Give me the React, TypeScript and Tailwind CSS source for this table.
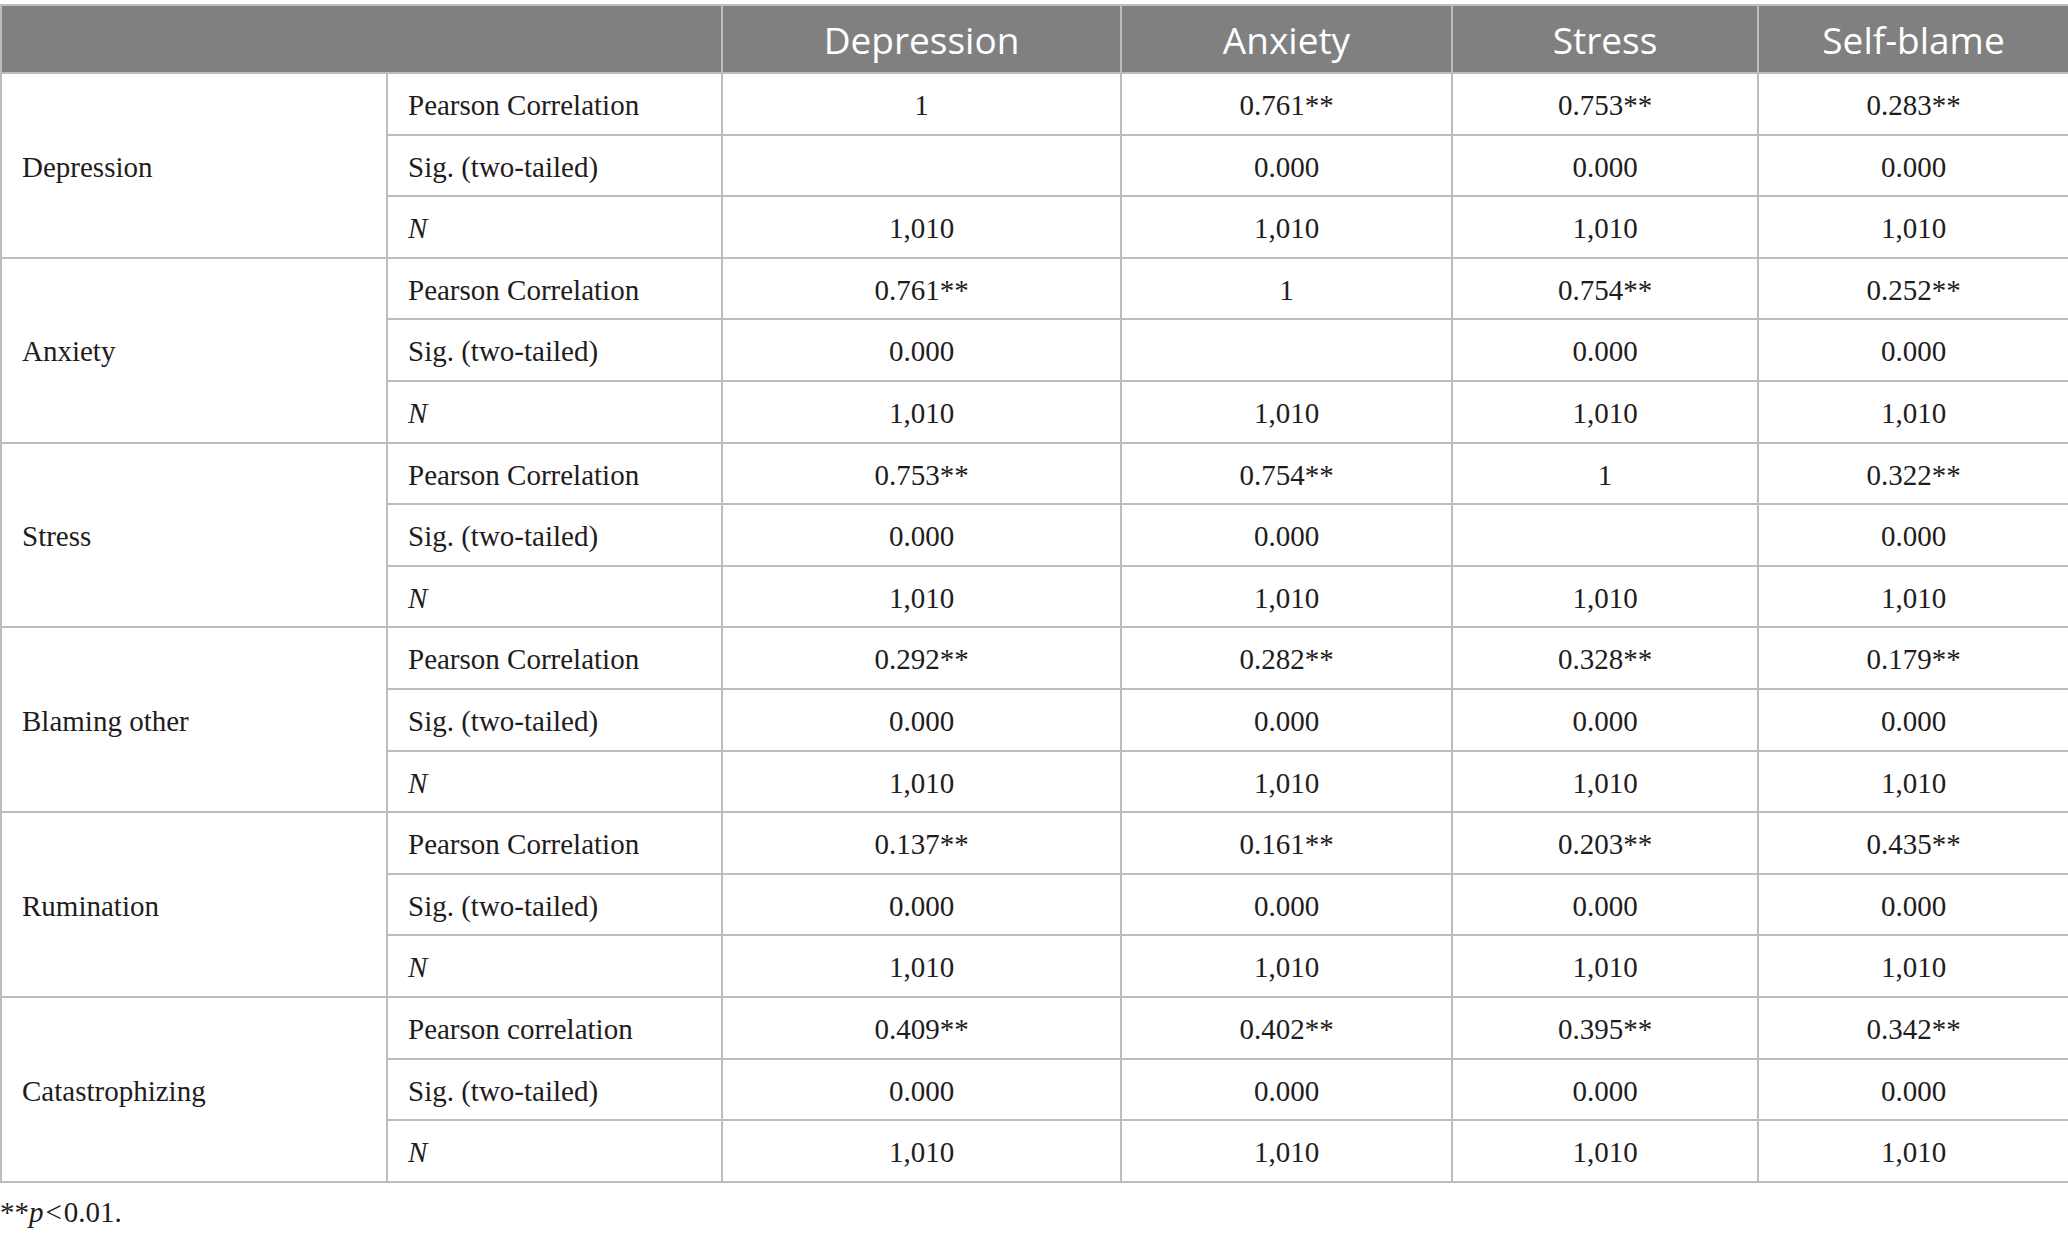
const columns = ["Depression", "Anxiety", "Stress", "Self-blame"];

type Group = {
  name: string;
  pearsonLabel: string;
  pearson: string[];
  sig: string[];
};

const groups: Group[] = [
  {
    name: "Depression",
    pearsonLabel: "Pearson Correlation",
    pearson: ["1", "0.761**", "0.753**", "0.283**"],
    sig: ["", "0.000", "0.000", "0.000"],
  },
  {
    name: "Anxiety",
    pearsonLabel: "Pearson Correlation",
    pearson: ["0.761**", "1", "0.754**", "0.252**"],
    sig: ["0.000", "", "0.000", "0.000"],
  },
  {
    name: "Stress",
    pearsonLabel: "Pearson Correlation",
    pearson: ["0.753**", "0.754**", "1", "0.322**"],
    sig: ["0.000", "0.000", "", "0.000"],
  },
  {
    name: "Blaming other",
    pearsonLabel: "Pearson Correlation",
    pearson: ["0.292**", "0.282**", "0.328**", "0.179**"],
    sig: ["0.000", "0.000", "0.000", "0.000"],
  },
  {
    name: "Rumination",
    pearsonLabel: "Pearson Correlation",
    pearson: ["0.137**", "0.161**", "0.203**", "0.435**"],
    sig: ["0.000", "0.000", "0.000", "0.000"],
  },
  {
    name: "Catastrophizing",
    pearsonLabel: "Pearson correlation",
    pearson: ["0.409**", "0.402**", "0.395**", "0.342**"],
    sig: ["0.000", "0.000", "0.000", "0.000"],
  },
];

const cell = "border-2 border-[#bdbdbd] align-middle pt-1";
const num = `${cell} text-center`;

export default function App() {
  return (
    <div className="w-[2068px] min-h-[1236px] bg-white pt-1 font-['Liberation_Serif',serif] text-[29px] text-[#1f1c1d]">
      <table className="w-[2068px] table-fixed border-collapse">
        <colgroup>
          <col className="w-[386px]" />
          <col className="w-[335px]" />
          <col className="w-[399px]" />
          <col className="w-[331px]" />
          <col className="w-[306px]" />
          <col className="w-[311px]" />
        </colgroup>
        <thead>
          <tr className="h-[68px] bg-[#808080]">
            <th colSpan={2} className="border-2 border-[#bdbdbd]"></th>
            {columns.map((c) => (
              <th
                key={c}
                className="border-2 border-[#bdbdbd] pt-[2px] text-center align-middle font-['Open_Sans',sans-serif] text-[37px] font-normal text-white"
              >
                {c}
              </th>
            ))}
          </tr>
        </thead>
        <tbody>
          {groups.map((g) => (
            <>
              <tr key={`${g.name}-p`} className="h-[61.6px]">
                <td rowSpan={3} className={`${cell} pl-5`}>
                  {g.name}
                </td>
                <td className={`${cell} pl-5`}>{g.pearsonLabel}</td>
                {g.pearson.map((v, i) => (
                  <td key={i} className={num}>
                    {v}
                  </td>
                ))}
              </tr>
              <tr key={`${g.name}-s`} className="h-[61.6px]">
                <td className={`${cell} pl-5`}>Sig. (two-tailed)</td>
                {g.sig.map((v, i) => (
                  <td key={i} className={num}>
                    {v}
                  </td>
                ))}
              </tr>
              <tr key={`${g.name}-n`} className="h-[61.6px]">
                <td className={`${cell} pl-5 italic`}>N</td>
                {columns.map((c) => (
                  <td key={c} className={num}>
                    1,010
                  </td>
                ))}
              </tr>
            </>
          ))}
        </tbody>
      </table>
      <p className="mt-3 leading-[34px]">
        **<span className="italic">p</span>
        <span className="mx-[2px]">&lt;</span>0.01.
      </p>
    </div>
  );
}
